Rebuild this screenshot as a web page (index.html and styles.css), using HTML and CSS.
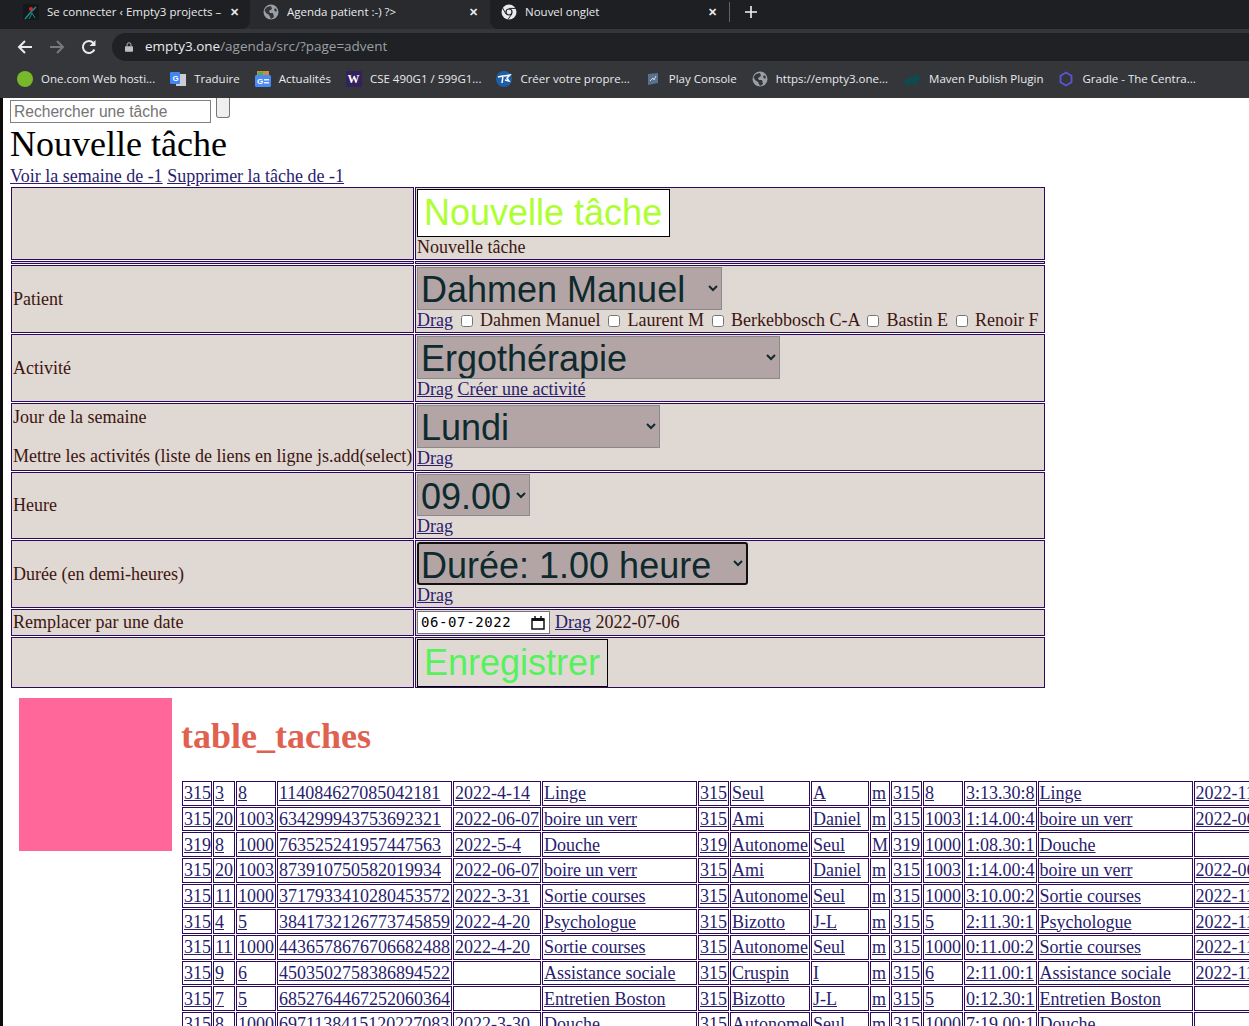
FILE: index.html
```html
<!DOCTYPE html>
<html lang="fr">
<head>
    <meta charset="UTF-8">
    <meta name="viewport" content="width=device-width, initial-scale=1.0">
    <title>Agenda patient :-) ?&gt;</title>
    <link rel="stylesheet" href="styles.css">
</head>
<body>
    <header class="browser">
        <div class="tabstrip">
            <div class="tab tab-first">
                <svg class="fav" viewBox="0 0 16 16"><rect width="16" height="16" fill="#15181a"/><path d="M2 15 L7 9 L13 3" stroke="#1d8f8a" stroke-width="1.5" fill="none"/><path d="M6 15 L9 9 L12 14" stroke="#1d8f8a" stroke-width="1" fill="none"/><circle cx="8" cy="5" r="2" fill="#d8232a"/></svg>
                <span class="tab-title">Se connecter ‹ Empty3 projects –</span>
                <span class="tab-close">✕</span>
            </div>
            <div class="tab tab-active">
                <svg class="fav" viewBox="0 0 16 16"><circle cx="8" cy="8" r="7.5" fill="#9aa0a6"/><path d="M4 3 L8 2 L9 5 L6 7 L7 9 L10 9 L11 13 L8 15 L6 11 L3 9 L1.5 6 Z" fill="#35363a"/><path d="M12 4 L14 6 L13 8 L11 6 Z" fill="#35363a"/></svg>
                <span class="tab-title">Agenda patient :-) ?&gt;</span>
                <span class="tab-close">✕</span>
            </div>
            <div class="tab tab-last">
                <svg class="fav" viewBox="0 0 16 16"><circle cx="8" cy="8" r="7.5" fill="#e8eaed"/><circle cx="8" cy="8" r="3.6" fill="#202124"/><circle cx="8" cy="8" r="2.4" fill="#e8eaed"/><path d="M8 4.4 H15 M5 10 L1.6 4 M10.8 10 L7 15.4" stroke="#202124" stroke-width="1"/></svg>
                <span class="tab-title">Nouvel onglet</span>
                <span class="tab-close">✕</span>
            </div>
            <div class="tab-rest">
                <span class="tab-sep"></span>
                <svg class="new-tab" viewBox="0 0 12 12"><path d="M6 0 V12 M0 6 H12" stroke="#f1f3f4" stroke-width="1.6"/></svg>
            </div>
        </div>
        <div class="toolbar">
            <svg class="nav" viewBox="0 0 16 16"><path d="M15 8 H2 M8 2 L2 8 L8 14" stroke="#e8eaed" stroke-width="2" fill="none"/></svg>
            <svg class="nav" viewBox="0 0 16 16"><path d="M1 8 H14 M8 2 L14 8 L8 14" stroke="#77797c" stroke-width="2" fill="none"/></svg>
            <svg class="nav" viewBox="0 0 16 16"><path d="M13.4 10.5 A6 6 0 1 1 12.4 4" stroke="#e8eaed" stroke-width="2" fill="none"/><path d="M14.5 1 V7 H8.5 Z" fill="#e8eaed"/></svg>
            <div class="omnibox">
                <svg class="lock" viewBox="0 0 10 12"><rect y="5" width="10" height="7" rx="1" fill="#bdc1c6"/><path d="M2.5 5 V3.2 A2.5 2.5 0 0 1 7.5 3.2 V5" stroke="#bdc1c6" stroke-width="1.2" fill="none"/></svg>
                <span class="url">empty3.one<span class="url-path">/agenda/src/?page=advent</span></span>
            </div>
        </div>
        <nav class="bookmarks">
            <a class="bm"><svg class="fav" viewBox="0 0 16 16"><circle cx="8" cy="8" r="8" fill="#78b82a"/></svg>One.com Web hosti...</a>
            <a class="bm"><svg class="fav" viewBox="0 0 16 16"><rect x="6" y="3" width="10" height="12" fill="#c9ccd1"/><rect y="1" width="10" height="12" rx="1" fill="#4285f4"/><text x="2.5" y="10" class="fav-text">G</text></svg>Traduire</a>
            <a class="bm"><svg class="fav" viewBox="0 0 16 16"><rect x="2" y="0" width="12" height="5" fill="#c58f3c"/><rect x="3" y="1" width="5" height="3" fill="#4caf50"/><rect y="4" width="16" height="12" rx="1.5" fill="#4c8bf5"/><rect x="9" y="8" width="5" height="1.5" fill="#e8f0fe"/><rect x="9" y="11" width="5" height="1.5" fill="#e8f0fe"/><text x="2" y="13" class="fav-text">G</text></svg>Actualités</a>
            <a class="bm"><svg class="fav" viewBox="0 0 16 16"><rect width="16" height="16" fill="#32215c"/><text x="1.5" y="12" class="fav-w">W</text></svg>CSE 490G1 / 599G1...</a>
            <a class="bm"><svg class="fav" viewBox="0 0 16 16"><circle cx="8" cy="8" r="8" fill="#1c5fa8"/><path d="M2 6 L7 5 L6 12 M8 5 L14 4 L11 7 L13 10 L9 9" stroke="#fff" stroke-width="1.5" fill="none"/></svg>Créer votre propre...</a>
            <a class="bm"><svg class="fav" viewBox="0 0 16 16"><path d="M3 3 L13 2 V12 L3 14 Z" fill="#58718c"/><path d="M5 10 L8 7 L9 9 L11 5" stroke="#cfd8e3" stroke-width="1" fill="none"/></svg>Play Console</a>
            <a class="bm"><svg class="fav" viewBox="0 0 16 16"><circle cx="8" cy="8" r="7.5" fill="#9aa0a6"/><path d="M4 3 L8 2 L9 5 L6 7 L7 9 L10 9 L11 13 L8 15 L6 11 L3 9 L1.5 6 Z" fill="#35363a"/><path d="M12 4 L14 6 L13 8 L11 6 Z" fill="#35363a"/></svg>https://empty3.one...</a>
            <a class="bm"><svg class="fav fav-wide" viewBox="0 0 18 16"><path d="M0 15 C1 9 5 6 10 6 C12 3 16 3 17 6 C18 9 16 11 14 10 V15 H11 V12 H7 V15 H4 V12 Z" fill="#0f4a4f"/></svg>Maven Publish Plugin</a>
            <a class="bm"><svg class="fav" viewBox="0 0 16 16"><path d="M8 1.5 L13.5 4.7 V11.3 L8 14.5 L2.5 11.3 V4.7 Z" stroke="#5b55d6" stroke-width="1.8" fill="none"/></svg>Gradle - The Centra...</a>
        </nav>
    </header>

    <main class="page">
        <div class="search-row">
            <input type="text" class="search" placeholder="Rechercher une tâche">
            <button class="search-btn"></button>
        </div>
        <h1>Nouvelle tâche</h1>
        <p class="links"><a href="#">Voir la semaine de -1</a> <a href="#">Supprimer la tâche de -1</a></p>

        <table class="form-table">
            <tr class="row-title">
                <td class="label"></td>
                <td>
                    <button class="btn-title">Nouvelle tâche</button><br>
                    Nouvelle tâche
                </td>
            </tr>
            <tr class="row-thin"><td></td><td></td></tr>
            <tr>
                <td class="label">Patient</td>
                <td>
                    <select class="big-select sel-patient"><option>Dahmen Manuel</option></select><br>
                    <a href="#">Drag</a>
                    <input type="checkbox"> Dahmen Manuel
                    <input type="checkbox"> Laurent M
                    <input type="checkbox"> Berkebbosch C-A
                    <input type="checkbox"> Bastin E
                    <input type="checkbox"> Renoir F
                </td>
            </tr>
            <tr>
                <td class="label">Activité</td>
                <td>
                    <select class="big-select sel-activity"><option>Ergothérapie</option></select><br>
                    <a href="#">Drag</a> <a href="#">Créer une activité</a>
                </td>
            </tr>
            <tr>
                <td class="label">
                    <p class="label-para">Jour de la semaine</p>
                    <p class="label-para">Mettre les activités (liste de liens en ligne js.add(select)</p>
                </td>
                <td>
                    <select class="big-select sel-day"><option>Lundi</option></select><br>
                    <a href="#">Drag</a>
                </td>
            </tr>
            <tr>
                <td class="label">Heure</td>
                <td>
                    <select class="big-select sel-hour"><option>09.00</option></select><br>
                    <a href="#">Drag</a>
                </td>
            </tr>
            <tr>
                <td class="label">Durée (en demi-heures)</td>
                <td>
                    <select class="big-select sel-duration"><option>Durée: 1.00 heure</option></select><br>
                    <a href="#">Drag</a>
                </td>
            </tr>
            <tr>
                <td class="label">Remplacer par une date</td>
                <td>
                    <div class="date-cell">
                        <span class="date-box">06-07-2022<svg class="cal" viewBox="0 0 14 14"><path d="M1 3 H13 V13 H1 Z" stroke="#111" stroke-width="1.5" fill="#fff"/><rect x="1" y="2" width="12" height="3" fill="#111"/><path d="M4 0 V3 M10 0 V3" stroke="#111" stroke-width="1.5"/></svg></span>
                        <span><a href="#">Drag</a> 2022-07-06</span>
                    </div>
                </td>
            </tr>
            <tr class="row-save">
                <td class="label"></td>
                <td><button class="btn-save">Enregistrer</button></td>
            </tr>
        </table>

        <section class="tasks">
            <div class="pink-box"></div>
            <div class="tasks-main">
                <h2>table_taches</h2>
                <table class="data-table">
                    <colgroup>
                        <col span="5">
                        <col class="col-activity">
                        <col span="2">
                        <col class="col-person">
                        <col span="4">
                        <col class="col-activity">
                        <col class="col-date">
                    </colgroup>
                    <tr><td><a href="#">315</a></td><td><a href="#">3</a></td><td><a href="#">8</a></td><td><a href="#">114084627085042181</a></td><td><a href="#">2022-4-14</a></td><td><a href="#">Linge</a></td><td><a href="#">315</a></td><td><a href="#">Seul</a></td><td><a href="#">A</a></td><td><a href="#">m</a></td><td><a href="#">315</a></td><td><a href="#">8</a></td><td><a href="#">3:13.30:8</a></td><td><a href="#">Linge</a></td><td><a href="#">2022-11-14</a></td></tr>
                    <tr><td><a href="#">315</a></td><td><a href="#">20</a></td><td><a href="#">1003</a></td><td><a href="#">634299943753692321</a></td><td><a href="#">2022-06-07</a></td><td><a href="#">boire un verr</a></td><td><a href="#">315</a></td><td><a href="#">Ami</a></td><td><a href="#">Daniel</a></td><td><a href="#">m</a></td><td><a href="#">315</a></td><td><a href="#">1003</a></td><td><a href="#">1:14.00:4</a></td><td><a href="#">boire un verr</a></td><td><a href="#">2022-06-07</a></td></tr>
                    <tr><td><a href="#">319</a></td><td><a href="#">8</a></td><td><a href="#">1000</a></td><td><a href="#">763525241957447563</a></td><td><a href="#">2022-5-4</a></td><td><a href="#">Douche</a></td><td><a href="#">319</a></td><td><a href="#">Autonome</a></td><td><a href="#">Seul</a></td><td><a href="#">M</a></td><td><a href="#">319</a></td><td><a href="#">1000</a></td><td><a href="#">1:08.30:1</a></td><td><a href="#">Douche</a></td><td></td></tr>
                    <tr><td><a href="#">315</a></td><td><a href="#">20</a></td><td><a href="#">1003</a></td><td><a href="#">873910750582019934</a></td><td><a href="#">2022-06-07</a></td><td><a href="#">boire un verr</a></td><td><a href="#">315</a></td><td><a href="#">Ami</a></td><td><a href="#">Daniel</a></td><td><a href="#">m</a></td><td><a href="#">315</a></td><td><a href="#">1003</a></td><td><a href="#">1:14.00:4</a></td><td><a href="#">boire un verr</a></td><td><a href="#">2022-06-07</a></td></tr>
                    <tr><td><a href="#">315</a></td><td><a href="#">11</a></td><td><a href="#">1000</a></td><td><a href="#">3717933410280453572</a></td><td><a href="#">2022-3-31</a></td><td><a href="#">Sortie courses</a></td><td><a href="#">315</a></td><td><a href="#">Autonome</a></td><td><a href="#">Seul</a></td><td><a href="#">m</a></td><td><a href="#">315</a></td><td><a href="#">1000</a></td><td><a href="#">3:10.00:2</a></td><td><a href="#">Sortie courses</a></td><td><a href="#">2022-11-10</a></td></tr>
                    <tr><td><a href="#">315</a></td><td><a href="#">4</a></td><td><a href="#">5</a></td><td><a href="#">3841732126773745859</a></td><td><a href="#">2022-4-20</a></td><td><a href="#">Psychologue</a></td><td><a href="#">315</a></td><td><a href="#">Bizotto</a></td><td><a href="#">J-L</a></td><td><a href="#">m</a></td><td><a href="#">315</a></td><td><a href="#">5</a></td><td><a href="#">2:11.30:1</a></td><td><a href="#">Psychologue</a></td><td><a href="#">2022-11-20</a></td></tr>
                    <tr><td><a href="#">315</a></td><td><a href="#">11</a></td><td><a href="#">1000</a></td><td><a href="#">4436578676706682488</a></td><td><a href="#">2022-4-20</a></td><td><a href="#">Sortie courses</a></td><td><a href="#">315</a></td><td><a href="#">Autonome</a></td><td><a href="#">Seul</a></td><td><a href="#">m</a></td><td><a href="#">315</a></td><td><a href="#">1000</a></td><td><a href="#">0:11.00:2</a></td><td><a href="#">Sortie courses</a></td><td><a href="#">2022-11-20</a></td></tr>
                    <tr><td><a href="#">315</a></td><td><a href="#">9</a></td><td><a href="#">6</a></td><td><a href="#">4503502758386894522</a></td><td></td><td><a href="#">Assistance sociale</a></td><td><a href="#">315</a></td><td><a href="#">Cruspin</a></td><td><a href="#">I</a></td><td><a href="#">m</a></td><td><a href="#">315</a></td><td><a href="#">6</a></td><td><a href="#">2:11.00:1</a></td><td><a href="#">Assistance sociale</a></td><td><a href="#">2022-11-15</a></td></tr>
                    <tr><td><a href="#">315</a></td><td><a href="#">7</a></td><td><a href="#">5</a></td><td><a href="#">6852764467252060364</a></td><td></td><td><a href="#">Entretien Boston</a></td><td><a href="#">315</a></td><td><a href="#">Bizotto</a></td><td><a href="#">J-L</a></td><td><a href="#">m</a></td><td><a href="#">315</a></td><td><a href="#">5</a></td><td><a href="#">0:12.30:1</a></td><td><a href="#">Entretien Boston</a></td><td></td></tr>
                    <tr><td><a href="#">315</a></td><td><a href="#">8</a></td><td><a href="#">1000</a></td><td><a href="#">6971138415120227083</a></td><td><a href="#">2022-3-30</a></td><td><a href="#">Douche</a></td><td><a href="#">315</a></td><td><a href="#">Autonome</a></td><td><a href="#">Seul</a></td><td><a href="#">m</a></td><td><a href="#">315</a></td><td><a href="#">1000</a></td><td><a href="#">7:19.00:1</a></td><td><a href="#">Douche</a></td><td></td></tr>
                </table>
            </div>
        </section>
    </main>
</body>
</html>
```

FILE: styles.css
```css
html, body {
    margin: 0;
    height: 1026px;
    overflow: hidden;
    background: #fff;
}

/* browser window */
.browser {
    height: 98px;
    font-family: "Open Sans", sans-serif;
    color: #e8eaed;
    font-size: 11.5px;
}
.tabstrip {
    display: flex;
    height: 29px;
    align-items: stretch;
    background: #2b2c2f;
}
.tab {
    display: flex;
    align-items: center;
    flex: none;
    box-sizing: border-box;
    padding-bottom: 6px;
    background: #1e1f22;
}
.tab-first {
    width: 250px;
    padding-left: 23px;
    border-bottom-right-radius: 8px;
}
.tab-active {
    width: 240px;
    padding-left: 13px;
    background: #292a2d;
}
.tab-last {
    width: 239px;
    padding-left: 11px;
    border-bottom-left-radius: 8px;
}
.tab-title {
    flex: 1;
    margin-left: 8px;
    white-space: nowrap;
    overflow: hidden;
}
.tab-first .tab-title { flex: none; width: 175px; }
.tab-first .tab-close { margin-left: 8px; }
.tab-close {
    flex: none;
    width: 21px;
    font-size: 11px;
    font-weight: bold;
}
.tab-first .tab-close { width: 20px; }
.tab-rest {
    flex: 1;
    display: flex;
    align-items: center;
    padding-bottom: 6px;
    background: #1e1f22;
}
.tab-sep {
    width: 1px;
    height: 20px;
    background: #5f6368;
}
.new-tab {
    width: 12px;
    height: 12px;
    margin-left: 15px;
}
.fav {
    width: 16px;
    height: 16px;
    flex: none;
}
.fav-wide { width: 18px; }
.fav-text {
    font-family: "Liberation Sans", sans-serif;
    font-size: 8px;
    font-weight: bold;
    fill: #fff;
}
.fav-w {
    font-family: "Liberation Serif", serif;
    font-size: 12px;
    font-weight: bold;
    fill: #fff;
}

.toolbar {
    display: flex;
    align-items: center;
    height: 33px;
    box-sizing: border-box;
    padding: 4px 0 1px 17px;
    gap: 16px;
    background: #35363a;
}
.nav {
    width: 16px;
    height: 16px;
    flex: none;
}
.omnibox {
    flex: 1;
    display: flex;
    align-items: center;
    height: 28px;
    margin-left: -1px;
    padding-left: 13px;
    background: #202124;
    border-radius: 14px 0 0 14px;
}
.lock {
    width: 8px;
    height: 10px;
    margin-right: 12px;
}
.url {
    font-size: 13.5px;
    line-height: 26px;
    padding-bottom: 2px;
    color: #e8eaed;
}
.url-path { color: #9aa0a6; }

.bookmarks {
    display: flex;
    align-items: center;
    box-sizing: border-box;
    height: 36px;
    padding: 0 0 3px 17px;
    gap: 15px;
    background: #35363a;
}
.bm {
    display: flex;
    align-items: center;
    gap: 8px;
    white-space: nowrap;
    color: #e8eaed;
}

/* page */
.page {
    box-sizing: border-box;
    height: 928px;
    padding-left: 7px;
    border-left: 3px solid #0c0c0c;
    font-family: "Liberation Serif", serif;
    font-size: 18px;
    color: #000;
}
a { color: #2a1c6e; }

.search-row {
    display: flex;
    align-items: flex-start;
    height: 25px;
}
.search {
    box-sizing: border-box;
    width: 201px;
    height: 23px;
    margin-top: 2px;
    padding: 1px 3px;
    border: 1px solid #808080;
    font-family: "Liberation Sans", sans-serif;
    font-size: 15.6px;
}
.search::placeholder { color: #757575; }
.search-btn {
    width: 14px;
    height: 20px;
    margin-left: 5px;
    border: 1px solid #767676;
    border-top: 0;
    border-radius: 0 0 3px 3px;
    background: #efefef;
}
h1 {
    margin: 0;
    font-size: 36px;
    font-weight: normal;
    line-height: 43px;
}
.links {
    margin: 0;
    line-height: 20px;
}

.form-table {
    width: 1036px;
    border-spacing: 1px;
    border-collapse: separate;
    color: #3d1510;
    table-layout: fixed;
}
.form-table td {
    padding: 1px;
    border: 1px solid #2d0a5e;
    background: #e0d8d3;
    line-height: 21px;
    vertical-align: middle;
    white-space: nowrap;
}
.form-table .label { width: 399px; }
.form-table .row-thin td {
    box-sizing: border-box;
    height: 3px;
    padding: 0;
    line-height: 0;
}
.form-table .row-save td {
    padding-top: 1px;
    padding-bottom: 0;
}
.label-para { margin: 0 0 18px; }
.label-para:last-child { margin: 0; }

.btn-title {
    box-sizing: border-box;
    height: 48px;
    padding: 0 7px 0 6px;
    background: #fff;
    border: 1px solid #000;
    font-family: "Liberation Sans", sans-serif;
    font-size: 36px;
    color: #adff2f;
    vertical-align: top;
}
.btn-save {
    display: block;
    box-sizing: border-box;
    height: 48px;
    padding: 0 7px 0 6px;
    background: #e0d8d3;
    border: 1px solid #000;
    font-family: "Liberation Sans", sans-serif;
    font-size: 36px;
    color: #55f25c;
}
.big-select {
    box-sizing: border-box;
    height: 43px;
    font-family: "Liberation Sans", sans-serif;
    font-size: 36px;
    text-indent: -1px;
    color: #0e2a2e;
    background-color: #b3a5a5;
    border: 1px solid #8a8a8a;
    vertical-align: top;
}
.sel-patient { width: 305px; }
.sel-activity { width: 363px; }
.sel-day { width: 243px; }
.sel-hour {
    width: 113px;
    height: 42px;
}
.sel-duration {
    width: 331px;
    padding-bottom: 2px;
    text-indent: -2px;
    border: 2px solid #111;
    border-radius: 3px;
}
.form-table input[type="checkbox"] {
    width: 12px;
    height: 12px;
    margin: 0 2.5px 0 3.5px;
    vertical-align: -1px;
}
.date-cell {
    display: flex;
    align-items: center;
    gap: 5px;
}
.date-box {
    display: flex;
    align-items: center;
    justify-content: space-between;
    box-sizing: border-box;
    width: 133px;
    height: 23px;
    padding: 0 4px 0 3px;
    background: #fff;
    border: 1px solid #767676;
    font-family: "DejaVu Sans Mono", monospace;
    font-size: 14px;
    letter-spacing: 0.6px;
    color: #000;
}
.cal {
    width: 14px;
    height: 14px;
}

.tasks {
    display: flex;
    margin-top: 9px;
    align-items: flex-start;
}
.pink-box {
    flex: none;
    width: 153px;
    height: 153px;
    margin-left: 9px;
    background: #ff6699;
}
.tasks-main {
    flex: none;
    margin-left: 9px;
}
h2 {
    margin: 18px 0 23px;
    font-size: 36px;
    line-height: 41px;
    color: #e0614f;
}
.data-table {
    border-spacing: 1px;
    border-collapse: separate;
    white-space: nowrap;
}
.data-table td {
    box-sizing: border-box;
    height: 24.67px;
    padding: 0 1px;
    border: 1px solid #2d0a5e;
    line-height: 20px;
}
.data-table td:first-child { padding-right: 0; }
.col-activity { width: 155px; }
.col-person { width: 58px; }
.col-date { width: 120px; }
```
